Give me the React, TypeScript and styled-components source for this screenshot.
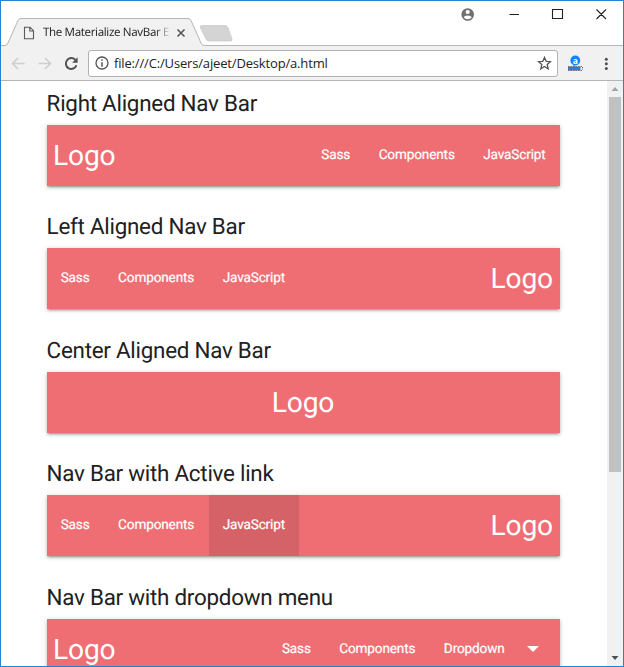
import React from "react";
import styled, { createGlobalStyle } from "styled-components";

const GlobalStyle = createGlobalStyle`
  * { box-sizing: border-box; }
  html, body { margin: 0; padding: 0; overflow: hidden; background: #fff; }
`;

const Window = styled.div`
  width: 624px;
  height: 667px;
  display: flex;
  flex-direction: column;
  border: 1px solid #2482d0;
  background: #fff;
  overflow: hidden;
`;

const TitleBar = styled.header`
  position: relative;
  height: 45px;
  flex: none;
  display: flex;
  justify-content: space-between;
`;

const TabOutline = styled.svg`
  position: absolute;
  left: 0;
  top: 0;
`;

const Tab = styled.div`
  position: relative;
  display: flex;
  align-items: center;
  width: 200px;
  height: 27px;
  margin-top: 18px;
  padding-left: 22px;
`;

const TabTitle = styled.span`
  width: 126px;
  margin-left: 8px;
  white-space: nowrap;
  font: 11.6px/16px "Open Sans", sans-serif;
  letter-spacing: -0.35px;
  text-rendering: geometricPrecision;
  color: #222;
  mask-image: linear-gradient(90deg, #000 112px, transparent 129px);
`;

const TabClose = styled.svg`
  margin-left: 7px;
`;

const WindowControls = styled.div`
  position: relative;
  display: flex;
  width: 164px;
  height: 28px;
`;

const Toolbar = styled.div`
  height: 35px;
  flex: none;
  display: flex;
  align-items: center;
  background: #f1f1f1;
  border-bottom: 1px solid #b5b5b5;
`;

const NavigationIcons = styled.svg`
  flex: none;
`;

const AddressBar = styled.div`
  display: flex;
  align-items: center;
  width: 470px;
  height: 27px;
  padding: 0 5px 0 6px;
  border: 1px solid #b1b1b1;
  border-radius: 3px;
  background: #fff;
`;

const Address = styled.span`
  flex: 1;
  margin-left: 5px;
  font: 13px/18px "Open Sans", sans-serif;
  letter-spacing: -0.16px;
  color: #222;
`;

const Viewport = styled.div`
  flex: 1;
  min-height: 0;
  display: flex;
`;

const Page = styled.main`
  flex: 1;
  min-width: 0;
  overflow: hidden;
  padding: 9px 46px 0 45.6px;
  font-family: Roboto, sans-serif;
  text-rendering: geometricPrecision;
`;

const Section = styled.section`
  height: 123.45px;
`;

const Heading = styled.h5`
  height: 35px;
  margin: 0;
  font-size: 22.4px;
  line-height: 28px;
  letter-spacing: -0.25px;
  font-weight: 400;
  white-space: nowrap;
  color: #212121;
`;

const NavBar = styled.nav<{ $layout?: "reverse" | "center" }>`
  width: 513.4px;
  height: 61px;
  display: flex;
  flex-direction: ${(p) => (p.$layout === "reverse" ? "row-reverse" : "row")};
  justify-content: ${(p) => (p.$layout === "center" ? "center" : "space-between")};
  background: #ee6e73;
  color: #fff;
  box-shadow: 0 2px 2px rgba(0, 0, 0, 0.14), 0 3px 1px -2px rgba(0, 0, 0, 0.12), 0 1px 5px rgba(0, 0, 0, 0.2);
`;

const Brand = styled.a`
  padding: 0 7px 0 6.5px;
  font-size: 28.2px;
  line-height: 61px;
  letter-spacing: -0.2px;
`;

const Links = styled.ul`
  display: flex;
  margin: 0;
  padding: 0;
  list-style: none;
`;

const NavLink = styled.li<{ $active?: boolean }>`
  display: flex;
  align-items: center;
  height: 61px;
  padding: 0 14.4px 1px 14.1px;
  font-size: 13.6px;
  letter-spacing: -0.15px;
  -webkit-text-stroke: 0.2px #fff;
  background: ${(p) => (p.$active ? "rgba(0, 0, 0, 0.1)" : "transparent")};
`;

const DropdownArrow = styled.svg`
  margin-left: 22px;
  margin-right: 7px;
`;

const ScrollTrack = styled.aside`
  width: 16px;
  flex: none;
  display: flex;
  flex-direction: column;
  align-items: center;
  background: #f1f1f1;
`;

const ScrollThumb = styled.div`
  width: 12px;
  height: 375px;
  background: #c1c1c1;
`;

const ScrollButton = styled.svg`
  flex: none;
  &:last-child { margin-top: auto; }
`;

type Item = { label: string; active?: boolean; dropdown?: boolean };
const items: Item[] = [{ label: "Sass" }, { label: "Components" }, { label: "JavaScript" }];

const sections: { title: string; layout?: "reverse" | "center"; items: Item[] }[] = [
  { title: "Right Aligned Nav Bar", items },
  { title: "Left Aligned Nav Bar", layout: "reverse", items },
  { title: "Center Aligned Nav Bar", layout: "center", items: [] },
  { title: "Nav Bar with Active link", layout: "reverse", items: [items[0], items[1], { label: "JavaScript", active: true }] },
  { title: "Nav Bar with dropdown menu", items: [items[0], items[1], { label: "Dropdown", dropdown: true }] },
];

const BrowserTop = () => (
  <TitleBar>
    <TabOutline width="622" height="45" viewBox="1 1 622 45">
      <path d="M1 45.5H5Q7 45.5 8 43L18 20.5Q19 18.5 21 18.5H188Q190 18.5 191 20.5L201 43Q202 45.5 205 45.5H623V46H1Z" fill="#f1f1f1" />
      <path d="M1 45.5H5Q7 45.5 8 43L18 20.5Q19 18.5 21 18.5H188Q190 18.5 191 20.5L201 43Q202 45.5 205 45.5H623" fill="none" stroke="#b5b5b5" />
      <path d="M202 25.5H225Q227 25.5 228 27.5L232 39Q233 41 230 41H209Q207 41 206 39L200.5 28Q199.5 25.5 202 25.5Z" fill="#d4d4d4" stroke="#c7c7c7" strokeWidth=".7" />
    </TabOutline>
    <Tab>
      <svg width="12" height="14" viewBox="0 0 12 14">
        <path d="M1.5 1.2H7L10.5 4.7V12.8H1.5ZM6.8 1.3V5H10.4" fill="none" stroke="#5a5a5a" strokeWidth="1.1" />
      </svg>
      <TabTitle>The Materialize NavBar E</TabTitle>
      <TabClose width="10" height="10" viewBox="0 0 10 10">
        <path d="M1.5 1.5L8.5 8.5M8.5 1.5L1.5 8.5" stroke="#555" strokeWidth="1.6" />
      </TabClose>
    </Tab>
    <WindowControls>
      <svg width="164" height="28" viewBox="459 1 164 28">
        <circle cx="467.7" cy="14.5" r="6.3" fill="#707070" />
        <circle cx="467.7" cy="12" r="2.1" fill="#fff" />
        <path d="M463.6 17.3Q464.5 15.6 467.7 15.6T471.8 17.3Q470.3 19.3 467.7 19.3T463.6 17.3Z" fill="#fff" />
        <path d="M509.5 14.5H519M552.5 9.5H562.5V18.5H552.5ZM596.5 9.5L606 19M606 9.5L596.5 19" fill="none" stroke="#222" strokeWidth="1.1" />
      </svg>
    </WindowControls>
  </TitleBar>
);

const BrowserToolbar = () => (
  <Toolbar>
    <NavigationIcons width="87" height="33" viewBox="1 46 87 33">
      <path d="M24.5 62.5H12.5M18 57L12.5 62.5L18 68M38.5 62.5H50.5M45 57L50.5 62.5L45 68" fill="none" stroke="#cfcfcf" strokeWidth="1.7" />
      <path d="M75.2 58.8A5.4 5.4 0 1 0 76.4 64.2" fill="none" stroke="#505050" strokeWidth="2" />
      <path d="M77.6 56.2V61.7H72.1Z" fill="#505050" />
    </NavigationIcons>
    <AddressBar>
      <svg width="14" height="14" viewBox="0 0 14 14">
        <circle cx="7" cy="7" r="6" fill="none" stroke="#555" strokeWidth="1.3" />
        <path d="M7 3.2V4.8M7 6.2V10.8" stroke="#555" strokeWidth="1.5" />
      </svg>
      <Address>file:///C:/Users/ajeet/Desktop/a.html</Address>
      <svg width="15" height="15" viewBox="0 0 15 15">
        <path d="M7.5 1.4L9.2 5.3L13.5 5.7L10.2 8.5L11.2 12.8L7.5 10.5L3.8 12.8L4.8 8.5L1.5 5.7L5.8 5.3Z" fill="none" stroke="#555" strokeWidth="1.3" />
      </svg>
    </AddressBar>
    <svg width="65" height="33" viewBox="558 46 65 33">
      <circle cx="575.3" cy="59.5" r="4.9" fill="#1683f7" />
      <text x="572.7" y="62.5" fontFamily="Open Sans" fontWeight="700" fontSize="8.5" fill="#fff">a</text>
      <path d="M568 65.5H580.5V69.5H568Z" fill="#3978c4" />
      <path d="M568 65.5H583M568 69.5H583M582.5 66V69" fill="none" stroke="#777" strokeDasharray="1.5 1" strokeWidth="1" />
      <path d="M574 64V66" stroke="#1683f7" />
      <circle cx="606.3" cy="58.3" r="1.5" fill="#505050" />
      <circle cx="606.3" cy="62.8" r="1.5" fill="#505050" />
      <circle cx="606.3" cy="67.4" r="1.5" fill="#505050" />
    </svg>
  </Toolbar>
);

export default function App() {
  return (
    <>
      <GlobalStyle />
      <Window>
        <BrowserTop />
        <BrowserToolbar />
        <Viewport>
          <Page>
            {sections.map((section) => (
              <Section key={section.title}>
                <Heading>{section.title}</Heading>
                <NavBar $layout={section.layout}>
                  <Brand>Logo</Brand>
                  {section.items.length > 0 && (
                    <Links>
                      {section.items.map((item) => (
                        <NavLink key={item.label} $active={item.active}>
                          {item.label}
                          {item.dropdown && (
                            <DropdownArrow width="12" height="6" viewBox="0 0 12 6">
                              <path d="M0 0H12L6 6Z" fill="#fff" />
                            </DropdownArrow>
                          )}
                        </NavLink>
                      ))}
                    </Links>
                  )}
                </NavBar>
              </Section>
            ))}
          </Page>
          <ScrollTrack>
            <ScrollButton width="16" height="16" viewBox="0 0 16 16">
              <path d="M4.5 10L8 6L11.5 10Z" fill="#a3a3a3" />
            </ScrollButton>
            <ScrollThumb />
            <ScrollButton width="16" height="16" viewBox="0 0 16 16">
              <path d="M4.5 6L8 10L11.5 6Z" fill="#505050" />
            </ScrollButton>
          </ScrollTrack>
        </Viewport>
      </Window>
    </>
  );
}
